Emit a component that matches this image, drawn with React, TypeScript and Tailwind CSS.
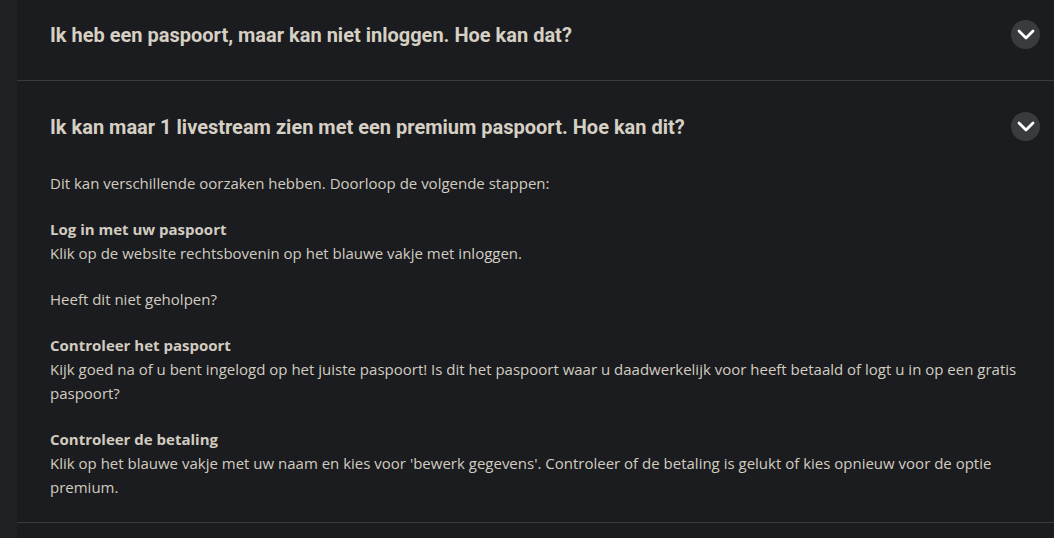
import React from "react";

function Chevron() {
  return (
    <div className="flex h-[29px] w-[29px] shrink-0 items-center justify-center rounded-full bg-[#393b3f]">
      <svg width="18" height="11" viewBox="0 0 18 11" fill="none">
        <path d="M2 2 L9 9 L16 2" stroke="#ffffff" strokeWidth="2.8" strokeLinecap="round" strokeLinejoin="round" />
      </svg>
    </div>
  );
}

export default function App() {
  const headFont = { fontFamily: "Roboto, 'Noto Sans', sans-serif" };
  const bodyFont = { fontFamily: "'Open Sans', 'Noto Sans', sans-serif" };
  return (
    <div className="flex h-[538px] w-full overflow-hidden bg-[#1b1c1f]">
      <div className="w-[17px] shrink-0 bg-[#202124]" />
      <div className="flex-1">
        <div className="-mt-[11px] border-b border-[#3a3b3e]">
          <div className="flex items-center justify-between pl-[33px] pr-[14px] py-[31px]">
            <h2 className="text-[20px] font-bold leading-[28px] text-[#d6d0c4]" style={headFont}>
              Ik heb een paspoort, maar kan niet inloggen. Hoe kan dat?
            </h2>
            <Chevron />
          </div>
        </div>
        <div className="border-b border-[#3a3b3e]">
          <div className="flex items-center justify-between pl-[33px] pr-[14px] pt-[31px] pb-[30px]">
            <h2 className="text-[20px] font-bold leading-[28px] text-[#d6d0c4]" style={headFont}>
              Ik kan maar 1 livestream zien met een premium paspoort. Hoe kan dit?
            </h2>
            <Chevron />
          </div>
          <div
            className="flex flex-col gap-[22px] pl-[33px] pr-[12px] pb-[23px] text-[15px] leading-[24px] text-[#d2ccc0]"
            style={bodyFont}
          >
            <p>Dit kan verschillende oorzaken hebben. Doorloop de volgende stappen:</p>
            <p>
              <strong className="font-bold">Log in met uw paspoort</strong>
              <br />
              Klik op de website rechtsbovenin op het blauwe vakje met inloggen.
            </p>
            <p>Heeft dit niet geholpen?</p>
            <p>
              <strong className="font-bold">Controleer het paspoort</strong>
              <br />
              Kijk goed na of u bent ingelogd op het juiste paspoort! Is dit het paspoort waar u daadwerkelijk voor heeft betaald of logt u in op een gratis paspoort?
            </p>
            <p>
              <strong className="font-bold">Controleer de betaling</strong>
              <br />
              Klik op het blauwe vakje met uw naam en kies voor 'bewerk gegevens'. Controleer of de betaling is gelukt of kies opnieuw voor de optie premium.
            </p>
          </div>
        </div>
      </div>
    </div>
  );
}
